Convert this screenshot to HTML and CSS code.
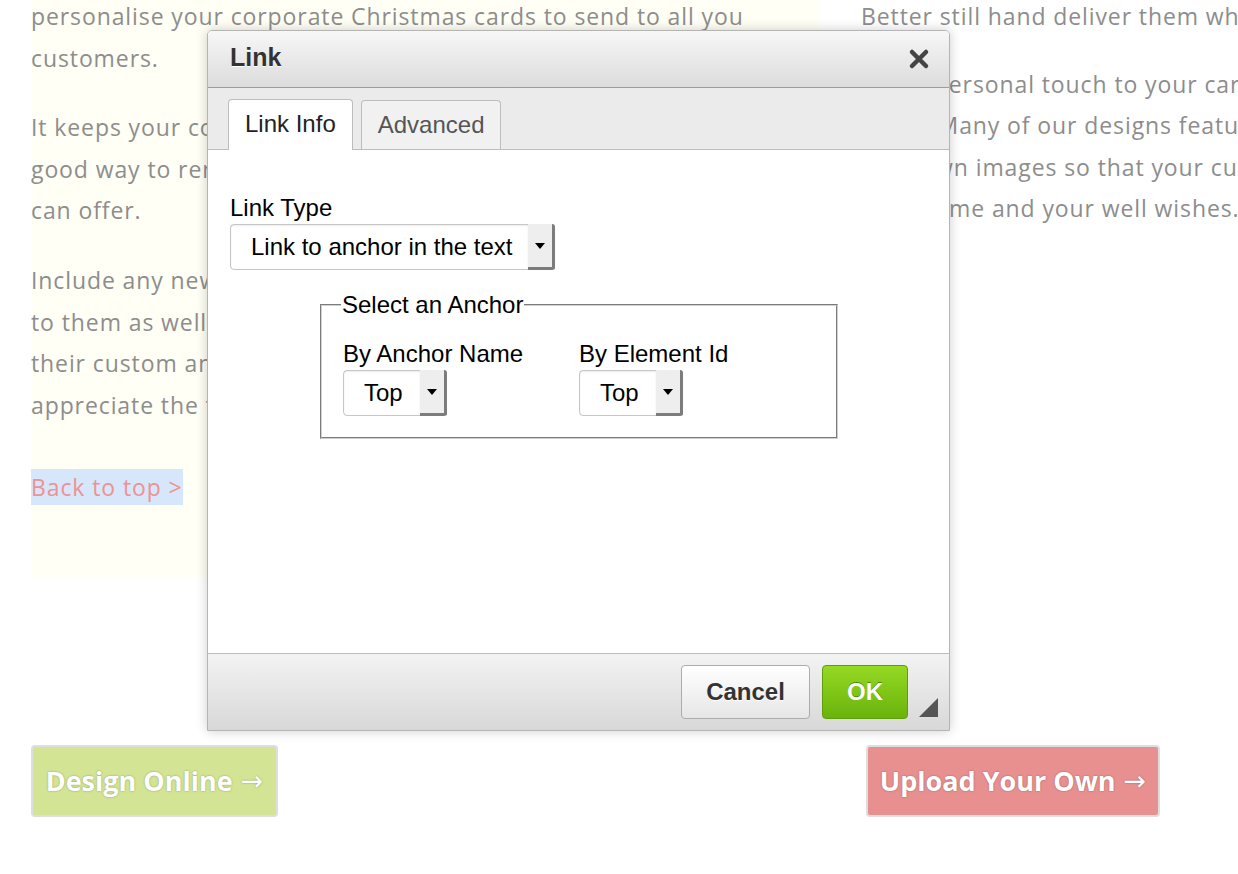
FILE: index.html
```html
<!DOCTYPE html>
<html lang="en">
<head>
    <meta charset="UTF-8">
    <meta name="viewport" content="width=device-width, initial-scale=1.0">
    <title>Christmas Cards - Link</title>
    <link rel="stylesheet" href="styles.css">
</head>
<body>
    <div class="page">
        <div class="columns">
            <div class="col col-left">
                <p>personalise your corporate Christmas cards to send to all you<br>customers.</p>
                <p>It keeps your company name fresh in their minds and is a<br>good way to remind them of the great service that you<br>can offer.</p>
                <p>Include any news or special offers that might be of interest<br>to them as well, and thank them for<br>their custom and loyalty over the year. They will<br>appreciate the thought you have put in.</p>
                <p class="back"><a href="#top" class="back-link">Back to top &gt;</a></p>
            </div>
            <div class="col col-right">
                <p>Better still hand deliver them when you visit your customers.</p>
                <p>Add a personal touch to your cards with your company logo<br>cards. Many of our designs feature space for your<br>your own images so that your customers can see<br>your name and your well wishes.</p>
            </div>
        </div>

        <div class="actions">
            <a href="#" class="big-btn btn-green">Design Online <span class="arrow">&rarr;</span></a>
            <a href="#" class="big-btn btn-red">Upload Your Own <span class="arrow">&rarr;</span></a>
        </div>
    </div>

    <div class="dialog">
        <div class="dialog-title">
            <span>Link</span>
            <svg class="close" width="22" height="22" viewBox="0 0 22 22">
                <path d="M4 4 L18 18 M18 4 L4 18" stroke="#444" stroke-width="4.5" stroke-linecap="round"/>
            </svg>
        </div>
        <div class="tabs">
            <div class="tab active">Link Info</div>
            <div class="tab">Advanced</div>
        </div>
        <div class="dialog-body">
            <label class="field-label">Link Type</label>
            <div class="select wide">
                <span class="select-text">Link to anchor in the text</span>
                <span class="select-arrow"></span>
            </div>

            <fieldset class="anchor-box">
                <legend>Select an Anchor</legend>
                <div class="anchor-row">
                    <div class="anchor-field">
                        <label class="field-label">By Anchor Name</label>
                        <div class="select small">
                            <span class="select-text">Top</span>
                            <span class="select-arrow"></span>
                        </div>
                    </div>
                    <div class="anchor-field">
                        <label class="field-label">By Element Id</label>
                        <div class="select small">
                            <span class="select-text">Top</span>
                            <span class="select-arrow"></span>
                        </div>
                    </div>
                </div>
            </fieldset>
        </div>
        <div class="dialog-footer">
            <button class="btn btn-cancel">Cancel</button>
            <button class="btn btn-ok">OK</button>
            <span class="resize"></span>
        </div>
    </div>
</body>
</html>
```

FILE: styles.css
```css
body {
    margin: 0;
    background-color: #fff;
    overflow: hidden;
    height: 874px;
    font-family: "Open Sans", "Noto Sans", sans-serif;
}

.page {
    margin-top: -4px;
    padding-left: 31px;
}

.columns {
    display: flex;
}

.col {
    font-size: 23px;
    letter-spacing: 0.9px;
    line-height: 41.6px;
    color: #8d8d8d;
    white-space: nowrap;
}

.col p {
    margin: 0 0 28px 0;
}

.col-left {
    width: 789px;
    flex-shrink: 0;
    background-color: #fffff5;
    padding-bottom: 68px;
}

.col-right {
    margin-left: 41px;
    width: 789px;
    flex-shrink: 0;
}

.col-right p {
    margin-bottom: 26px;
}

.col .back {
    margin: 41px 0 0 0;
}

.back-link {
    color: #ee9292;
    text-decoration: none;
    background-color: #d6e6fb;
    padding: 2px 0;
}

.actions {
    display: flex;
    margin-top: 168px;
}

.big-btn {
    display: flex;
    align-items: center;
    justify-content: center;
    height: 72px;
    box-sizing: border-box;
    border: 2px solid #dedede;
    border-radius: 4px;
    color: #fff;
    font-weight: bold;
    font-size: 27px;
    text-decoration: none;
    text-shadow: 0 0 2px rgba(0,0,0,0.35);
}

.big-btn .arrow {
    font-family: "DejaVu Sans", sans-serif;
    font-weight: normal;
    margin-left: 8px;
}

.btn-green {
    width: 247px;
    background-color: #d3e594;
}

.btn-red {
    width: 294px;
    margin-left: 588px;
    background-color: #e89090;
}

/* dialog */

.dialog {
    position: absolute;
    left: 207px;
    top: 30px;
    width: 743px;
    height: 701px;
    box-sizing: border-box;
    border: 1px solid #b4b4b4;
    border-radius: 5px 5px 0 0;
    background-color: #fff;
    box-shadow: 0 0 12px rgba(0,0,0,0.2);
    display: flex;
    flex-direction: column;
    font-family: "Liberation Sans", Arial, sans-serif;
    color: #000;
}

.dialog-title {
    height: 57px;
    box-sizing: border-box;
    display: flex;
    align-items: center;
    justify-content: space-between;
    padding: 0 19px 3px 22px;
    background: linear-gradient(#f7f7f7, #dcdcdc);
    border-bottom: 1px solid #9d9d9d;
    border-radius: 4px 4px 0 0;
    font-size: 25px;
    font-weight: bold;
    color: #333;
    text-shadow: 0 1px 0 #fff;
}

.dialog-title .close {
    margin-top: 2px;
}

.tabs {
    height: 62px;
    box-sizing: border-box;
    display: flex;
    align-items: flex-end;
    gap: 8px;
    padding-left: 20px;
    background-color: #ebebeb;
    border-bottom: 1px solid #bdbdbd;
}

.tab {
    height: 49px;
    box-sizing: border-box;
    padding: 10px 16px 0 16px;
    line-height: 28px;
    border: 1px solid #bdbdbd;
    border-bottom: none;
    border-radius: 4px 4px 0 0;
    background-color: #f1f1f1;
    font-size: 24px;
    color: #555;
}

.tab.active {
    height: 51px;
    margin-bottom: -1px;
    background-color: #fff;
    color: #222;
}

.dialog-body {
    flex: 1;
    padding: 44px 22px 0 22px;
}

.field-label {
    display: block;
    font-size: 24px;
    line-height: 28px;
    white-space: nowrap;
}

.select {
    display: inline-flex;
    height: 46px;
    box-sizing: border-box;
    border: 1px solid #c6c6c6;
    border-radius: 4px;
    background-color: #fff;
    margin-top: 2px;
}

.select-text {
    flex: 1;
    display: flex;
    align-items: center;
    font-size: 24px;
    padding-left: 20px;
    box-shadow: inset 0 1px 2px rgba(0,0,0,0.08);
}

.select-arrow {
    width: 24px;
    background-color: #eee;
    border-right: 3px solid #7c7c7c;
    border-bottom: 3px solid #7c7c7c;
    border-radius: 0 3px 3px 0;
    margin: -1px -1px -1px 0;
    display: flex;
    align-items: center;
    justify-content: center;
}

.select-arrow::after {
    content: "";
    border-style: solid;
    border-width: 6px 5px 0 5px;
    border-color: #000 transparent transparent transparent;
}

.select.wide {
    width: 325px;
}

.select.small {
    width: 104px;
}

.anchor-box {
    width: 517px;
    box-sizing: border-box;
    margin: 21px 0 0 90px;
    padding: 21px 21px 21px 21px;
    border: 2px groove #d0d0d0;
}

.anchor-box legend {
    font-size: 24px;
    line-height: 28px;
    padding: 0 1px;
    margin-left: -2px;
}

.anchor-row {
    display: flex;
}

.anchor-field {
    width: 236px;
}

.dialog-footer {
    position: relative;
    height: 77px;
    box-sizing: border-box;
    display: flex;
    justify-content: flex-end;
    gap: 12px;
    padding: 11px 41px 0 0;
    background: linear-gradient(#f3f3f3, #d8d8d8);
    border-top: 1px solid #bcbcbc;
}

.btn {
    height: 54px;
    box-sizing: border-box;
    border-radius: 4px;
    font-family: "Liberation Sans", Arial, sans-serif;
    font-size: 24px;
    font-weight: bold;
}

.btn-cancel {
    width: 129px;
    border: 1px solid #acacac;
    background: linear-gradient(#ffffff, #e6e6e6);
    color: #333;
    text-shadow: 0 1px 0 #fff;
}

.btn-ok {
    width: 86px;
    border: 1px solid #5e9e08;
    background: linear-gradient(#95d923, #6ab30c);
    color: #fff;
    text-shadow: 0 -1px 0 #4f8a08;
}

.resize {
    position: absolute;
    right: 11px;
    bottom: 13px;
    width: 0;
    height: 0;
    border-style: solid;
    border-width: 0 0 19px 19px;
    border-color: transparent transparent #555 transparent;
}
```
